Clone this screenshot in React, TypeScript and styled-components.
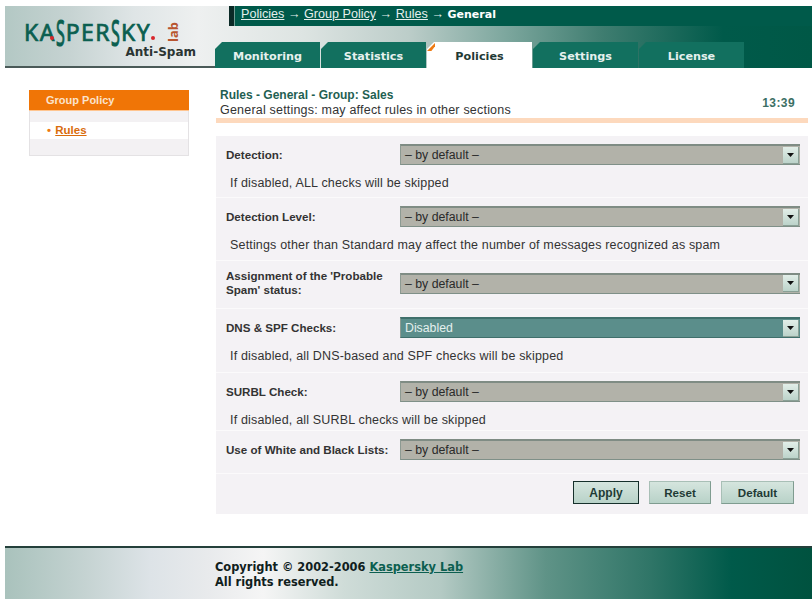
import * as React from "react";
import styled, {createGlobalStyle} from "styled-components";

const GlobalStyle = createGlobalStyle`
    html, body {
        margin: 0;
        padding: 0;
        background: #fff;
    }
    body {
        font-family: "Liberation Sans", Arial, sans-serif;
        font-size: 11px;
        color: #222;
    }
`;

const Page = styled.div`
    width: 812px;
    height: 601px;
    padding: 6px 0 0 5px;
    box-sizing: border-box;
    overflow: hidden;
`;

const Header = styled.header`
    height: 62px;
    display: flex;
    background: linear-gradient(90deg, #b3c8c4 0%, #c6d3d2 8%, #dfe5e6 16%, #eef0f0 24%, #dde4e2 37%, #bccdc9 50%, #7da79e 62%, #3f7d70 74%, #005a4a 89%, #005846 100%);
`;

const LogoBox = styled.div`
    width: 210px;
    flex: none;
    position: relative;
    box-sizing: border-box;
    border-bottom: 2px solid #4a5a58;
`;

const LogoWord = styled.div`
    position: absolute;
    left: 19px;
    top: 12px;
    display: flex;
    align-items: center;
    height: 28px;
    font-family: "Noto Sans", sans-serif;
    font-size: 23px;
    letter-spacing: 1.4px;
    line-height: 28px;
    color: #0b5f50;
    -webkit-text-stroke: 0.7px #0b5f50;
`;

const LogoS = styled.span`
    display: inline-block;
    transform: scale(0.7, 1.6);
    margin: 0 -2px;
`;

const LogoDot = styled.i<{$x: number; $y: number}>`
    position: absolute;
    left: ${(p) => p.$x}px;
    top: ${(p) => p.$y}px;
    width: 4px;
    height: 4px;
    border-radius: 50%;
    background: #d8262c;
`;

const LogoLab = styled.span`
    position: absolute;
    left: 162px;
    top: 16px;
    writing-mode: vertical-rl;
    transform: rotate(180deg);
    font-family: "Noto Sans", sans-serif;
    font-weight: 700;
    font-size: 13px;
    line-height: 12px;
    color: #b8552f;
`;

const Product = styled.div`
    position: absolute;
    right: 19px;
    top: 39px;
    font-family: "DejaVu Sans", sans-serif;
    font-weight: 700;
    font-size: 12px;
    color: #2b3533;
`;

const HeaderRight = styled.div`
    flex: 1;
    display: flex;
    flex-direction: column;
    justify-content: space-between;
`;

const Crumbs = styled.div`
    margin-left: 14px;
    height: 20px;
    box-sizing: border-box;
    padding-left: 7px;
    background: #005a4a;
    border-left: 5px solid #0b2a26;
    box-shadow: inset 1px 0 0 #6f9d93;
    color: #e4efec;
    font-size: 12.6px;
    line-height: 17px;
    white-space: nowrap;
    a {
        color: #e4efec;
        text-decoration: underline;
    }
    b {
        color: #fff;
        font-family: "DejaVu Sans", sans-serif;
        font-size: 11px;
    }
`;

const Tabs = styled.nav`
    display: flex;
    gap: 1px;
`;

const TabWrap = styled.div`
    position: relative;
`;

const Tab = styled.div<{$active?: boolean}>`
    width: 105px;
    height: 26px;
    box-sizing: border-box;
    text-align: center;
    padding-top: 8px;
    font-family: "DejaVu Sans", sans-serif;
    font-weight: 700;
    font-size: 11.2px;
    line-height: 14px;
    color: ${(p) => (p.$active ? "#1f3a35" : "#e6f0ee")};
    background: ${(p) => (p.$active ? "#fff" : "#12705f")};
    clip-path: polygon(7px 0, 100% 0, 100% 100%, 0 100%, 0 7px);
`;

const Notch = styled.i`
    position: absolute;
    left: 0;
    top: 1px;
    width: 8px;
    height: 8px;
    background: #ee7a12;
    clip-path: polygon(100% 0, 100% 40%, 55% 100%, 0 100%);
`;

const Content = styled.div`
    display: flex;
    align-items: flex-start;
    padding-top: 22px;
`;

const Sidebar = styled.aside`
    width: 160px;
    margin-left: 24px;
    margin-right: 27px;
    flex: none;
    box-sizing: border-box;
    background: #f3f1f3;
    border: 1px solid #e4e2e4;
    border-top: 0;
    padding-bottom: 16px;
`;

const SideTitle = styled.div`
    height: 21px;
    box-sizing: border-box;
    background: #f07506;
    border-bottom: 1px solid #ffc590;
    padding-left: 17px;
    margin: 0 -1px;
    color: #fbe3cc;
    font-weight: 700;
    font-size: 11px;
    line-height: 20px;
`;

const SideRow = styled.div`
    margin-top: 11px;
    height: 17px;
    background: #fff;
    padding-left: 17px;
    font-size: 11.5px;
    line-height: 16px;
    font-weight: 700;
    color: #ee7a12;
    a {
        color: #d96c0c;
        text-decoration: underline;
        margin-left: 1px;
    }
`;

const Main = styled.main`
    width: 592px;
    flex: none;
`;

const TitleBar = styled.div`
    height: 33px;
    box-sizing: border-box;
    border-bottom: 5px solid #fdd9bd;
    display: flex;
    justify-content: space-between;
    padding: 0 5px 0 4px;
`;

const TitleText = styled.div`
    font-size: 12.5px;
    letter-spacing: 0.2px;
    line-height: 14px;
    margin-top: -2px;
    color: #333;
    white-space: nowrap;
    b {
        display: block;
        font-size: 12px;
        letter-spacing: 0;
        line-height: 15px;
        color: #1f5f52;
    }
`;

const Clock = styled.div`
    font-weight: 700;
    font-size: 12px;
    letter-spacing: 0.4px;
    color: #3c6f64;
    padding: 6px 8px 0 0;
`;

const Form = styled.div`
    margin-top: 13px;
    background: #f4f2f5;
    display: flex;
    flex-direction: column;
`;

const Section = styled.section<{$height: number}>`
    height: ${(p) => p.$height}px;
    box-sizing: border-box;
    border-bottom: 1px solid #fbfafb;
    padding: 8px 8px 0 10px;
`;

const FieldRow = styled.div`
    display: flex;
    align-items: center;
    min-height: 21px;
`;

const Label = styled.label`
    width: 174px;
    flex: none;
    font-size: 11.6px;
    font-weight: 700;
    line-height: 14px;
    color: #333;
`;

const Select = styled.div<{$changed?: boolean}>`
    flex: 1;
    height: 21px;
    box-sizing: border-box;
    display: flex;
    align-items: center;
    justify-content: space-between;
    padding: 0 1px 0 4px;
    background: ${(p) => (p.$changed ? "#5b8e8b" : "#b2b2a9")};
    border-top: 2px solid ${(p) => (p.$changed ? "#3f6f6b" : "#7f8c84")};
    border-bottom: 1px solid ${(p) => (p.$changed ? "#3f6f6b" : "#7f9088")};
    border-left: 1px solid #8c9a92;
    color: ${(p) => (p.$changed ? "#e4f0ee" : "#2a2a2a")};
    font-size: 12.3px;
`;

const Arrow = styled.span`
    width: 15px;
    height: 16px;
    background: linear-gradient(180deg, #e2eee8, #bcd3ca);
    border-right: 1px solid #8aa096;
    border-bottom: 1px solid #8aa096;
    display: flex;
    align-items: center;
    justify-content: center;
    svg {
        display: block;
    }
`;

const Hint = styled.p`
    margin: 11px 0 0 4px;
    font-size: 12.5px;
    letter-spacing: 0.17px;
    line-height: 14px;
    color: #333;
    white-space: nowrap;
`;

const Actions = styled.div`
    height: 40px;
    display: flex;
    justify-content: flex-end;
    gap: 10px;
    padding: 7px 14px 0 0;
    box-sizing: border-box;
`;

const Button = styled.button<{$primary?: boolean; $width: number}>`
    width: ${(p) => p.$width}px;
    height: 23px;
    box-sizing: border-box;
    padding: 0;
    background: linear-gradient(180deg, #d5e5de, #b8d2c8);
    border: ${(p) => (p.$primary ? "1.5px solid #16302b" : "1px solid #a8bfb6")};
    border-bottom-color: ${(p) => (p.$primary ? "#16302b" : "#7f9c90")};
    border-right-color: ${(p) => (p.$primary ? "#16302b" : "#7f9c90")};
    font-family: "Liberation Sans", Arial, sans-serif;
    font-weight: 700;
    font-size: ${(p) => (p.$primary ? "12px" : "11.6px")};
    color: #1f3a35;
`;

const Footer = styled.footer`
    margin-top: 32px;
    height: 53px;
    box-sizing: border-box;
    border-top: 2px solid #24403b;
    background: linear-gradient(90deg, #a9c2bc 0%, #c5d3d2 10%, #dde3e7 18%, #e8eaec 25%, #f5f5f5 32%, #cfdcd8 42%, #b4cac4 54%, #5f9387 67%, #2f7567 80%, #005a4a 90%, #00523f 100%);
    padding: 12px 0 0 210px;
    font-family: "DejaVu Sans", sans-serif;
    font-weight: 700;
    font-size: 11.4px;
    line-height: 15px;
    color: #10201d;
    a {
        color: #0c5f50;
        text-decoration: underline;
    }
`;

const ArrowIcon = () => (
    <Arrow>
        <svg width="7" height="4" viewBox="0 0 7 4"><polygon points="0,0 7,0 3.5,4" fill="#111" /></svg>
    </Arrow>
);

interface RowItem {
    label: React.ReactNode;
    value: string;
    hint?: string;
    height: number;
    changed?: boolean;
}

const rows: RowItem[] = [
    {label: "Detection:", value: "– by default –", hint: "If disabled, ALL checks will be skipped", height: 62},
    {label: "Detection Level:", value: "– by default –", hint: "Settings other than Standard may affect the number of messages recognized as spam", height: 63},
    {label: <>Assignment of the 'Probable<br />Spam' status:</>, value: "– by default –", height: 48},
    {label: "DNS & SPF Checks:", value: "Disabled", hint: "If disabled, all DNS-based and SPF checks will be skipped", changed: true, height: 64},
    {label: "SURBL Check:", value: "– by default –", hint: "If disabled, all SURBL checks will be skipped", height: 58},
    {label: "Use of White and Black Lists:", value: "– by default –", height: 43},
];

const tabs = ["Monitoring", "Statistics", "Policies", "Settings", "License"];

const App: React.FC = () => {
    return (
        <Page>
            <GlobalStyle />
            <Header>
                <LogoBox>
                    <LogoWord>
                        KA<LogoS>S</LogoS>PER<LogoS>S</LogoS>KY
                    </LogoWord>
                    <LogoDot $x={45} $y={30} />
                    <LogoDot $x={146} $y={30} />
                    <LogoLab>lab</LogoLab>
                    <Product>Anti-Spam</Product>
                </LogoBox>
                <HeaderRight>
                    <Crumbs>
                        <a href="#">Policies</a> → <a href="#">Group Policy</a> → <a href="#">Rules</a> → <b>General</b>
                    </Crumbs>
                    <Tabs>
                        {tabs.map((name) => (
                            <TabWrap key={name}>
                                <Tab $active={name === "Policies"}>{name}</Tab>
                                {name === "Policies" && <Notch />}
                            </TabWrap>
                        ))}
                    </Tabs>
                </HeaderRight>
            </Header>
            <Content>
                <Sidebar>
                    <SideTitle>Group Policy</SideTitle>
                    <SideRow>• <a href="#">Rules</a></SideRow>
                </Sidebar>
                <Main>
                    <TitleBar>
                        <TitleText>
                            <b>Rules - General - Group: Sales</b>
                            General settings: may affect rules in other sections
                        </TitleText>
                        <Clock>13:39</Clock>
                    </TitleBar>
                    <Form>
                        {rows.map((row) => (
                            <Section key={row.value + row.height} $height={row.height}>
                                <FieldRow>
                                    <Label>{row.label}</Label>
                                    <Select $changed={row.changed}>
                                        {row.value}
                                        <ArrowIcon />
                                    </Select>
                                </FieldRow>
                                {row.hint && <Hint>{row.hint}</Hint>}
                            </Section>
                        ))}
                        <Actions>
                            <Button $primary $width={66}>Apply</Button>
                            <Button $width={62}>Reset</Button>
                            <Button $width={73}>Default</Button>
                        </Actions>
                    </Form>
                </Main>
            </Content>
            <Footer>
                Copyright © 2002-2006 <a href="#">Kaspersky Lab</a>
                <br />
                All rights reserved.
            </Footer>
        </Page>
    );
};

export default App;
